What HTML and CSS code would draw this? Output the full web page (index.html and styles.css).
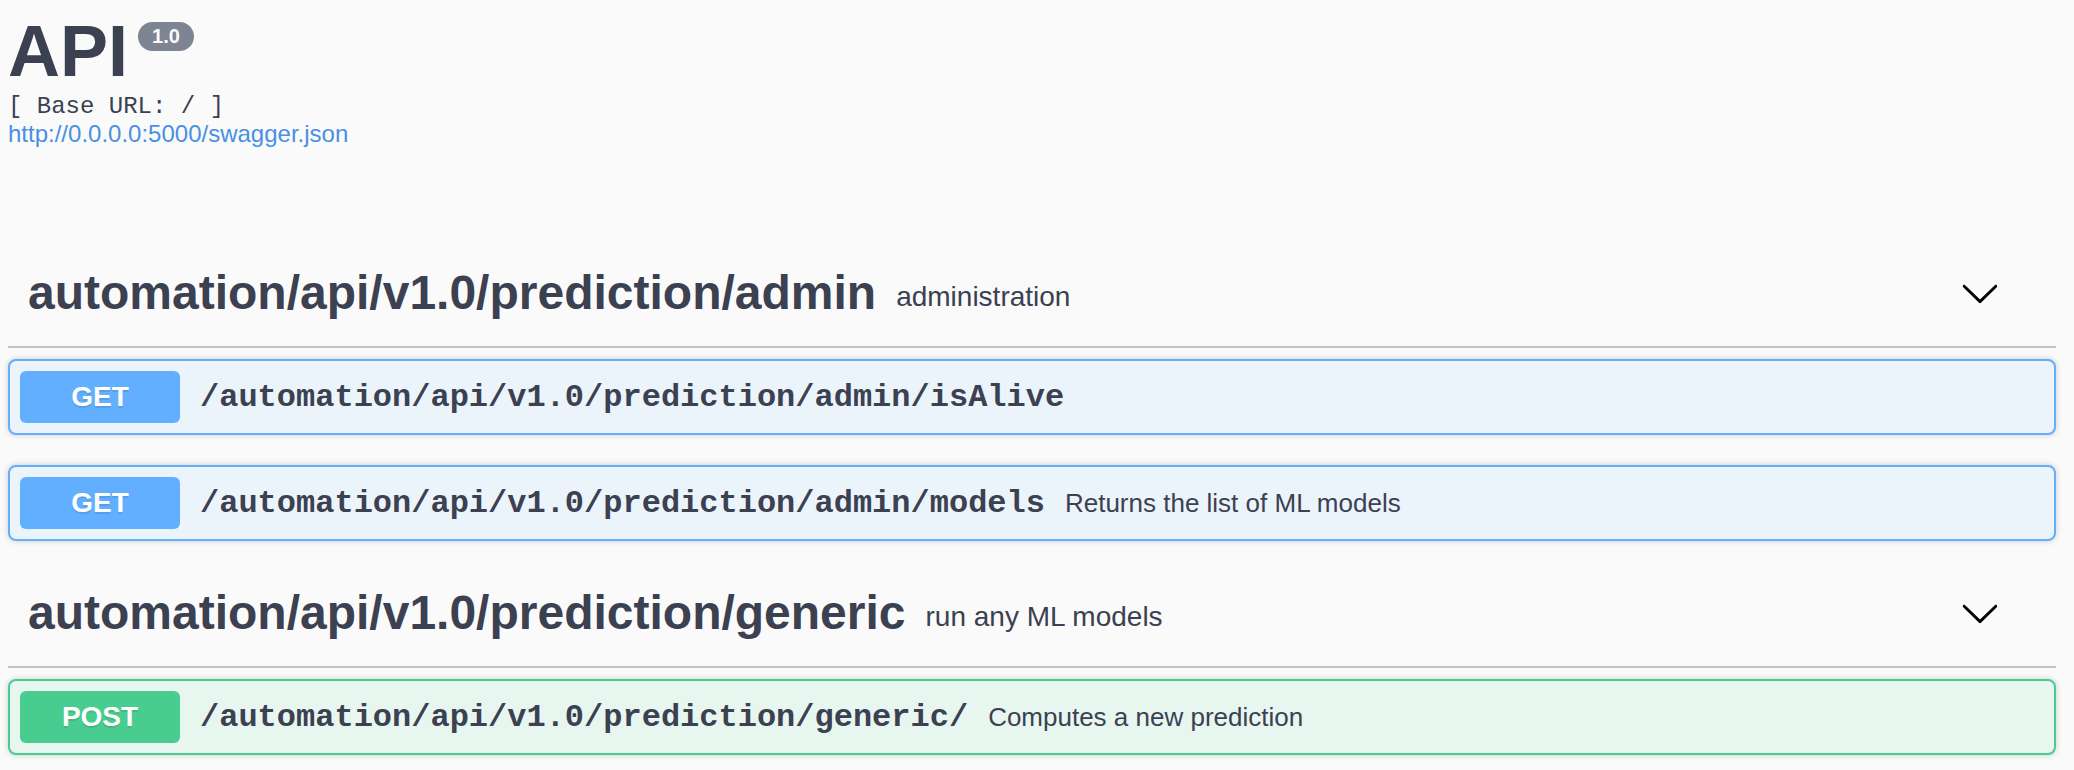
FILE: index.html
```html
<!DOCTYPE html>
<html>
<head>
<meta charset="utf-8">
<title>API</title>
<link rel="stylesheet" href="styles.css">
</head>
<body>
<div class="wrapper">
  <div class="info">
    <div class="title-row">
      <h2 class="title">API</h2>
      <span class="version">1.0</span>
    </div>
    <pre class="base-url">[ Base URL: / ]</pre>
    <a class="spec-link" href="#">http://0.0.0.0:5000/swagger.json</a>
  </div>

  <section class="tag-section">
    <h4 class="tag">
      <span class="tag-name">automation/api/v1.0/prediction/admin</span>
      <small class="tag-desc">administration</small>
      <svg class="arrow" width="40" height="40" viewBox="0 0 20 20"><path d="M17.418 6.109c.272-.268.709-.268.979 0s.271.701 0 .969l-7.908 7.83c-.27.268-.707.268-.979 0l-7.908-7.830c-.27-.268-.27-.701 0-.969.271-.268.709-.268.979 0L10 13.25l7.418-7.141z"/></svg>
    </h4>
    <div class="opblock get">
      <span class="method">GET</span>
      <span class="path">/automation/api/v1.0/prediction/admin/isAlive</span>
    </div>
    <div class="opblock get">
      <span class="method">GET</span>
      <span class="path">/automation/api/v1.0/prediction/admin/models</span>
      <span class="summary">Returns the list of ML models</span>
    </div>
  </section>

  <section class="tag-section">
    <h4 class="tag">
      <span class="tag-name">automation/api/v1.0/prediction/generic</span>
      <small class="tag-desc">run any ML models</small>
      <svg class="arrow" width="40" height="40" viewBox="0 0 20 20"><path d="M17.418 6.109c.272-.268.709-.268.979 0s.271.701 0 .969l-7.908 7.83c-.27.268-.707.268-.979 0l-7.908-7.830c-.27-.268-.27-.701 0-.969.271-.268.709-.268.979 0L10 13.25l7.418-7.141z"/></svg>
    </h4>
    <div class="opblock post">
      <span class="method">POST</span>
      <span class="path">/automation/api/v1.0/prediction/generic/</span>
      <span class="summary">Computes a new prediction</span>
    </div>
  </section>
</div>
</body>
</html>
```

FILE: styles.css
```css
html, body {
  margin: 0;
  padding: 0;
  background: #fafafa;
}

body {
  font-family: "Liberation Sans", Arial, sans-serif;
  color: #3b4151;
}

.wrapper {
  padding: 10px 18px 0 8px;
}

.info {
  margin-bottom: 104px;
}

.title-row {
  display: flex;
  align-items: flex-start;
}

.title {
  margin: 0;
  font-size: 72px;
  line-height: 83px;
  font-weight: 700;
  color: #3b4151;
}

.version {
  margin: 12px 0 0 10px;
  padding: 3px 14px;
  line-height: 23px;
  font-size: 20px;
  font-weight: 700;
  color: #fafafa;
  background: #7d8492;
  border-radius: 57px;
}

.base-url {
  margin: 0;
  font-family: "Liberation Mono", "Courier New", monospace;
  font-size: 24px;
  line-height: 27px;
  font-weight: 400;
  color: #3b4151;
}

.spec-link {
  display: block;
  font-size: 24px;
  line-height: 27px;
  color: #4990e2;
  text-decoration: none;
}

.tag-section {
  display: flex;
  flex-direction: column;
}

.tag {
  display: flex;
  align-items: center;
  margin: 0 0 11px;
  padding: 14px 56px 26px 20px;
  border-bottom: 2px solid rgba(59, 65, 81, 0.3);
  font-size: 48px;
  font-weight: 700;
  color: #3b4151;
}

.tag-name {
  line-height: 55px;
}

.tag-desc {
  flex: 1;
  margin-top: 8px;
  padding: 0 20px;
  font-size: 28px;
  font-weight: 400;
  color: #3b4151;
}

.arrow {
  flex: none;
  fill: #000;
}

.opblock {
  display: flex;
  align-items: center;
  margin: 0 0 30px;
  padding: 10px;
  border: 2px solid;
  border-radius: 8px;
  box-shadow: 0 0 6px rgba(0, 0, 0, 0.19);
}

.opblock.get {
  border-color: #61affe;
  background: #ebf3fb;
}

.opblock.post {
  border-color: #49cc90;
  background: #e8f6f0;
}

.method {
  min-width: 160px;
  padding: 12px 0;
  line-height: 28px;
  font-size: 28px;
  font-weight: 700;
  text-align: center;
  color: #fff;
  border-radius: 6px;
  text-shadow: 0 2px 0 rgba(0, 0, 0, 0.1);
}

.get .method {
  background: #61affe;
}

.post .method {
  background: #49cc90;
}

.path {
  padding: 0 20px;
  font-family: "Liberation Mono", "Courier New", monospace;
  font-size: 32px;
  font-weight: 700;
  color: #3b4151;
}

.summary {
  flex: 1;
  font-size: 26px;
  color: #3b4151;
}
```
